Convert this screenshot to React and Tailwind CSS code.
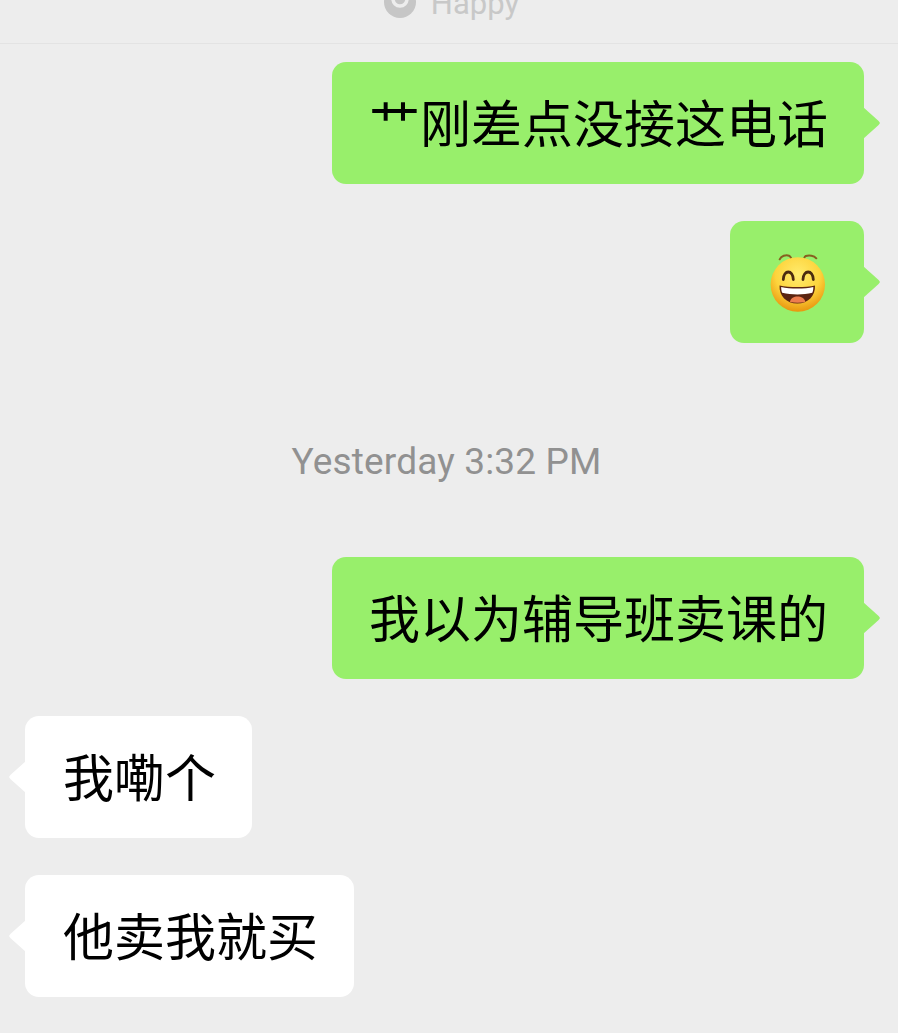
import React from 'react';

const cjk = "font-['Liberation_Sans','Noto_Sans_CJK_SC',sans-serif]";

// WeChat [Grin]-style emoji with the little antennae
const GrinEmoji = () => (
  <svg width="60" height="60" viewBox="0 0 60 60" fill="none" className="ml-px">
    <defs>
      <radialGradient id="face" cx="50%" cy="32%" r="68%">
        <stop offset="0%" stopColor="#ffec6e" />
        <stop offset="60%" stopColor="#fdd43c" />
        <stop offset="100%" stopColor="#e8960f" />
      </radialGradient>
    </defs>
    <path d="M11.7 5.3 C13 2 18 0.5 21 1.7 C23 2.6 23.8 5.5 24.3 8.7 M48.3 4.3 C46 1.5 41 0.8 37.7 2 C36 2.8 35.6 5.5 35.3 8.7" stroke="#87601f" strokeWidth="2" strokeLinecap="round" />
    <circle cx="29.8" cy="30.5" r="27.2" fill="url(#face)" />
    <path d="M15.3 25.5 C15.8 15.5 24.8 15.5 25.3 25.5 M35 25.5 C35.5 15.5 44.8 15.5 45.3 25.5" stroke="#4b2b10" strokeWidth="2.8" strokeLinecap="round" />
    <path d="M11.5 31.5 C21 33.5 38 33.5 47 31.5 C47.5 42 40 49.5 29.3 49.5 C18.5 49.5 11 42 11.5 31.5 Z" fill="#5a2410" />
    <path d="M13.2 33 C22 35 37 35 45.3 33 C45.4 35.2 45 37.2 44.3 38.8 C35 41 24 41 14.2 38.8 C13.5 37.2 13.1 35.2 13.2 33 Z" fill="#ffffff" />
    <path d="M22 48 C22.5 44.2 26 42.6 29.5 42.6 C33 42.6 36.7 44.2 37.3 48 C32.5 49 26.8 49 22 48 Z" fill="#ed7d4e" />
  </svg>
);

const Bubble = ({ mine, children }) => (
  <div className={`relative h-[122px] rounded-[14px] flex items-center text-[51px] leading-none text-black ${cjk} ${mine ? 'bg-[#98ef6b] pl-[37px] pr-[36px]' : 'bg-white pl-[38px] pr-[36px]'}`}>
    {mine ? (
      <span className="absolute right-[-16px] top-[45px] w-[17px] h-[32px] bg-[#98ef6b] [clip-path:polygon(0_0,92%_44%,100%_50%,92%_56%,0_100%)]" />
    ) : (
      <span className="absolute left-[-16px] top-[45px] w-[17px] h-[32px] bg-white [clip-path:polygon(100%_0,8%_44%,0_50%,8%_56%,100%_100%)]" />
    )}
    <span className="relative top-[2px]">{children}</span>
  </div>
);

const App = () => {
  return (
    <div className="w-[898px] h-[1033px] overflow-hidden bg-[#ededed]">
      {/* Top bar, mostly scrolled off */}
      <div className="h-[44px] border-b border-[#e3e3e3] overflow-hidden flex justify-center items-end pb-[25px] gap-[15px] pl-[5px]">
        <svg width="32" height="32" viewBox="0 0 32 32" className="shrink-0">
          <circle cx="16" cy="16" r="16" fill="#c6c6c6" />
          <circle cx="16" cy="13" r="7" fill="none" stroke="#ededed" strokeWidth="3.5" />
        </svg>
        <span className="font-['Roboto',sans-serif] text-[31px] leading-[28px] text-[#c8c8c8]">Happy</span>
      </div>

      <div className="flex flex-col pt-[18px]">
        <div className="flex justify-end pr-[34px]">
          <Bubble mine>艹刚差点没接这电话</Bubble>
        </div>
        <div className="flex justify-end pr-[34px] mt-[37px]">
          <Bubble mine><GrinEmoji /></Bubble>
        </div>

        <div className="mt-[98px] mb-[-2px] pr-[5px] h-[42px] flex items-center justify-center font-['Roboto',sans-serif] text-[37px] tracking-[0.15px] text-[#919191]">
          Yesterday 3:32 PM
        </div>

        <div className="flex justify-end pr-[34px] mt-[76px]">
          <Bubble mine>我以为辅导班卖课的</Bubble>
        </div>
        <div className="flex justify-start pl-[25px] mt-[37px]">
          <Bubble>我嘞个</Bubble>
        </div>
        <div className="flex justify-start pl-[25px] mt-[37px]">
          <Bubble>他卖我就买</Bubble>
        </div>
      </div>
    </div>
  );
};

export default App;
